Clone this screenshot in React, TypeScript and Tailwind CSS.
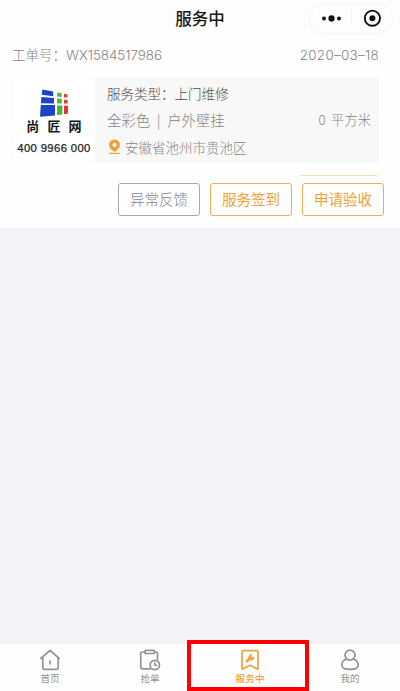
import type { ReactNode } from "react";

function Logo() {
  return (
    <svg className="mt-[10px] ml-[2px] h-[30px] w-[30px] shrink-0" viewBox="0 0 30 30">
      <g fill="#1d43c6">
        <path d="M2.4 .4 13.2 2.6V7.2L1.7 5.8Z" />
        <path d="M1.4 8 14 8.9V14.6L.9 14.3Z" />
        <path d="M.8 16 15 16.1V26.5L0 27.8Z" />
      </g>
      <g fill="#4db53c">
        <path d="M17.2 3.4 21.6 4.2V8L17.2 7.5Z" />
        <path d="M17 9.6 21.8 10V14.4H17Z" />
        <path d="M17 16.4H22.4V25.4L17 26.1Z" />
      </g>
      <g fill="#e8342f">
        <path d="M24 4.8 27.4 5.4V8.5L24 8.2Z" />
        <path d="M24 10.8 27.6 11.1V14.5H24Z" />
        <path d="M24 16.8H28V24.5L24 25.2Z" />
      </g>
    </svg>
  );
}

function Button({ children, className }: { children: ReactNode; className: string }) {
  return (
    <button className={`flex h-[33px] items-center justify-center rounded-[3px] border pb-px text-[14.5px] leading-none whitespace-nowrap ${className}`}>
      {children}
    </button>
  );
}

function Tab({ label, active, children }: { label: string; active?: boolean; children: ReactNode }) {
  return (
    <div className={`flex w-[100px] flex-col items-center pt-[4px] ${active ? "text-[#eda13c]" : "text-[#929294]"}`}>
      <svg className="h-[24px] w-[24px]" viewBox="0 0 24 24" fill="none" stroke="currentColor" strokeWidth="1.7" strokeLinecap="round" strokeLinejoin="round">
        {children}
      </svg>
      <span className={`text-[9.6px] leading-[12px] ${active ? "font-medium" : ""}`}>{label}</span>
    </div>
  );
}

export default function App() {
  return (
    <div className="flex h-[691px] w-[400px] flex-col overflow-hidden bg-[#f5f3f7] font-['Noto_Sans_CJK_SC',sans-serif] font-light text-[#858585]">
      <header className="relative flex h-[36px] shrink-0 items-center justify-center bg-[#fdfdfd]">
        <h1 className="pt-px text-[16.5px] leading-none font-medium text-[#181818]">服务中</h1>
        <div className="absolute top-[3px] right-[7px] flex h-[31px] w-[84px] items-center rounded-full border border-[#f5f5f5] bg-[#fefefe]">
          <svg className="h-full w-full" viewBox="0 0 82 29">
            <circle cx="14" cy="14.4" r="2" fill="#101010" />
            <circle cx="21.5" cy="14.4" r="3.1" fill="#101010" />
            <circle cx="29" cy="14.4" r="2" fill="#101010" />
            <path d="M41.5 5.5V23.5" stroke="#f2f2f2" />
            <circle cx="62.4" cy="14.2" r="7.6" fill="none" stroke="#101010" strokeWidth="1.9" />
            <circle cx="62.4" cy="14.2" r="3" fill="#101010" />
          </svg>
        </div>
      </header>

      <section className="flex h-[192px] shrink-0 flex-col bg-[#fefefe]">
        <div className="flex h-[42px] items-center justify-between pr-[21px] pb-[3px] pl-[12px] text-[13.5px] leading-none">
          <span className="whitespace-pre">工单号：<span className="font-['Inter'] text-[13.4px] tracking-[-0.05px]">WX1584517986</span></span>
          <span className="font-['Inter'] text-[13.4px] tracking-[0.3px]">2020–03–18</span>
        </div>

        <div className="ml-[12px] flex h-[84px] w-[367px] bg-[#f8f8f8]">
          <div className="flex w-[84px] flex-col items-center border border-[#fafafa] bg-white">
            <Logo />
            <span className="mt-[-2px] ml-[1px] text-[13px] leading-[18px] font-bold tracking-[8.2px] whitespace-nowrap text-[#151515] [margin-right:-7px]">尚匠网</span>
            <span className="mt-[6px] font-['Liberation_Sans'] text-[11.3px] leading-[14px] font-normal tracking-[0.35px] whitespace-nowrap text-[#222222] [-webkit-text-stroke:0.25px_#222222]">400 9966 000</span>
          </div>
          <div className="flex flex-1 flex-col pr-[8px] pl-[11px]">
            <p className="mt-[5px] text-[13.5px] leading-[20px] font-light text-[#4c4c4c]">服务类型：上门维修</p>
            <div className="mt-[7px] flex h-[20px] items-center justify-between">
              <p className="flex text-[14.4px] leading-[20px]">全彩色<span className="w-[17px] text-center">|</span>户外壁挂</p>
              <p className="text-[13.3px] leading-[20px] [word-spacing:2.5px]">0 平方米</p>
            </div>
            <div className="mt-[7px] flex items-center">
              <svg className="mr-[4px] ml-[1px] h-[16px] w-[13px]" viewBox="0 0 13 16">
                <path fill="#f0a13a" fillRule="evenodd" d="M6.5.5A5.5 5.5 0 0 0 1 6C1 9 4 11 6.5 13 9 11 12 9 12 6A5.5 5.5 0 0 0 6.5.5ZM6.5 3.8A2.1 2.1 0 1 1 6.5 8 2.1 2.1 0 0 1 6.5 3.8Z" />
                <path d="M1.2 14.4H11.8" stroke="#f0a13a" strokeWidth="1.3" />
              </svg>
              <p className="text-[13.5px] leading-[20px]">安徽省池州市贵池区</p>
            </div>
          </div>
        </div>

        <div className="mt-[13px] ml-[300px] h-px w-[77px] shrink-0 bg-[#fbdcb5]" />
        <div className="mt-[7px] flex justify-end pr-[16px]">
          <Button className="mr-[10px] w-[82px] border-[#a8a8aa] text-[#858587]">异常反馈</Button>
          <Button className="mr-[10px] w-[82px] border-[#edae59] font-normal text-[#eda13c]">服务签到</Button>
          <Button className="w-[82px] border-[#edae59] font-normal text-[#eda13c]">申请验收</Button>
        </div>
      </section>

      <main className="flex-1" />

      <nav className="relative flex h-[47px] shrink-0 bg-[#fefefe] font-normal">
        <Tab label="首页">
          <path d="M4.8 9.5V20A1.3 1.3 0 0 0 6.1 21.3H18.9A1.3 1.3 0 0 0 20.2 20V9.5M2.8 10.3 12 2.5 21.2 10.3M12 13V16" />
        </Tab>
        <Tab label="抢单">
          <path d="M7 4H4.3A1.5 1.5 0 0 0 2.8 5.5V19.2A1.5 1.5 0 0 0 4.3 20.9H12M16.5 4H18A1.5 1.5 0 0 1 19.5 5.5V11.5" />
          <rect x="7" y="2.3" width="9.5" height="3.2" rx="1" />
          <circle cx="16.8" cy="17" r="4.7" />
          <path d="M16.8 14.8V17.2H18.8" strokeWidth="1.4" />
        </Tab>
        <Tab label="服务中" active>
          <path d="M5.5 2.7H18.6A1.4 1.4 0 0 1 20 4.1V21.2L12 17.3 4 21.2V4.1A1.4 1.4 0 0 1 5.5 2.7Z" />
          <path d="M8.8 13.3 12 10.6" strokeWidth="2.5" />
          <path fill="currentColor" stroke="none" d="M14.6 6.3 13.1 8 14.2 9.5 16.3 8.5C17 11.3 14.6 13.2 12.3 12.4L10.3 10.5C9.8 8.2 11.7 5.9 14.6 6.3Z" />
        </Tab>
        <Tab label="我的">
          <circle cx="12" cy="7.1" r="5" />
          <path d="M8.7 11C5.7 12 3.8 14.2 3.8 17.2 3.8 20.4 6.5 21.3 12 21.3S20.2 20.4 20.2 17.2C20.2 14.2 18.3 12 15.3 11" />
        </Tab>
        <div className="absolute top-[-4px] left-[187px] h-[51px] w-[122px] border-4 border-[#ff0000]" />
      </nav>
    </div>
  );
}
